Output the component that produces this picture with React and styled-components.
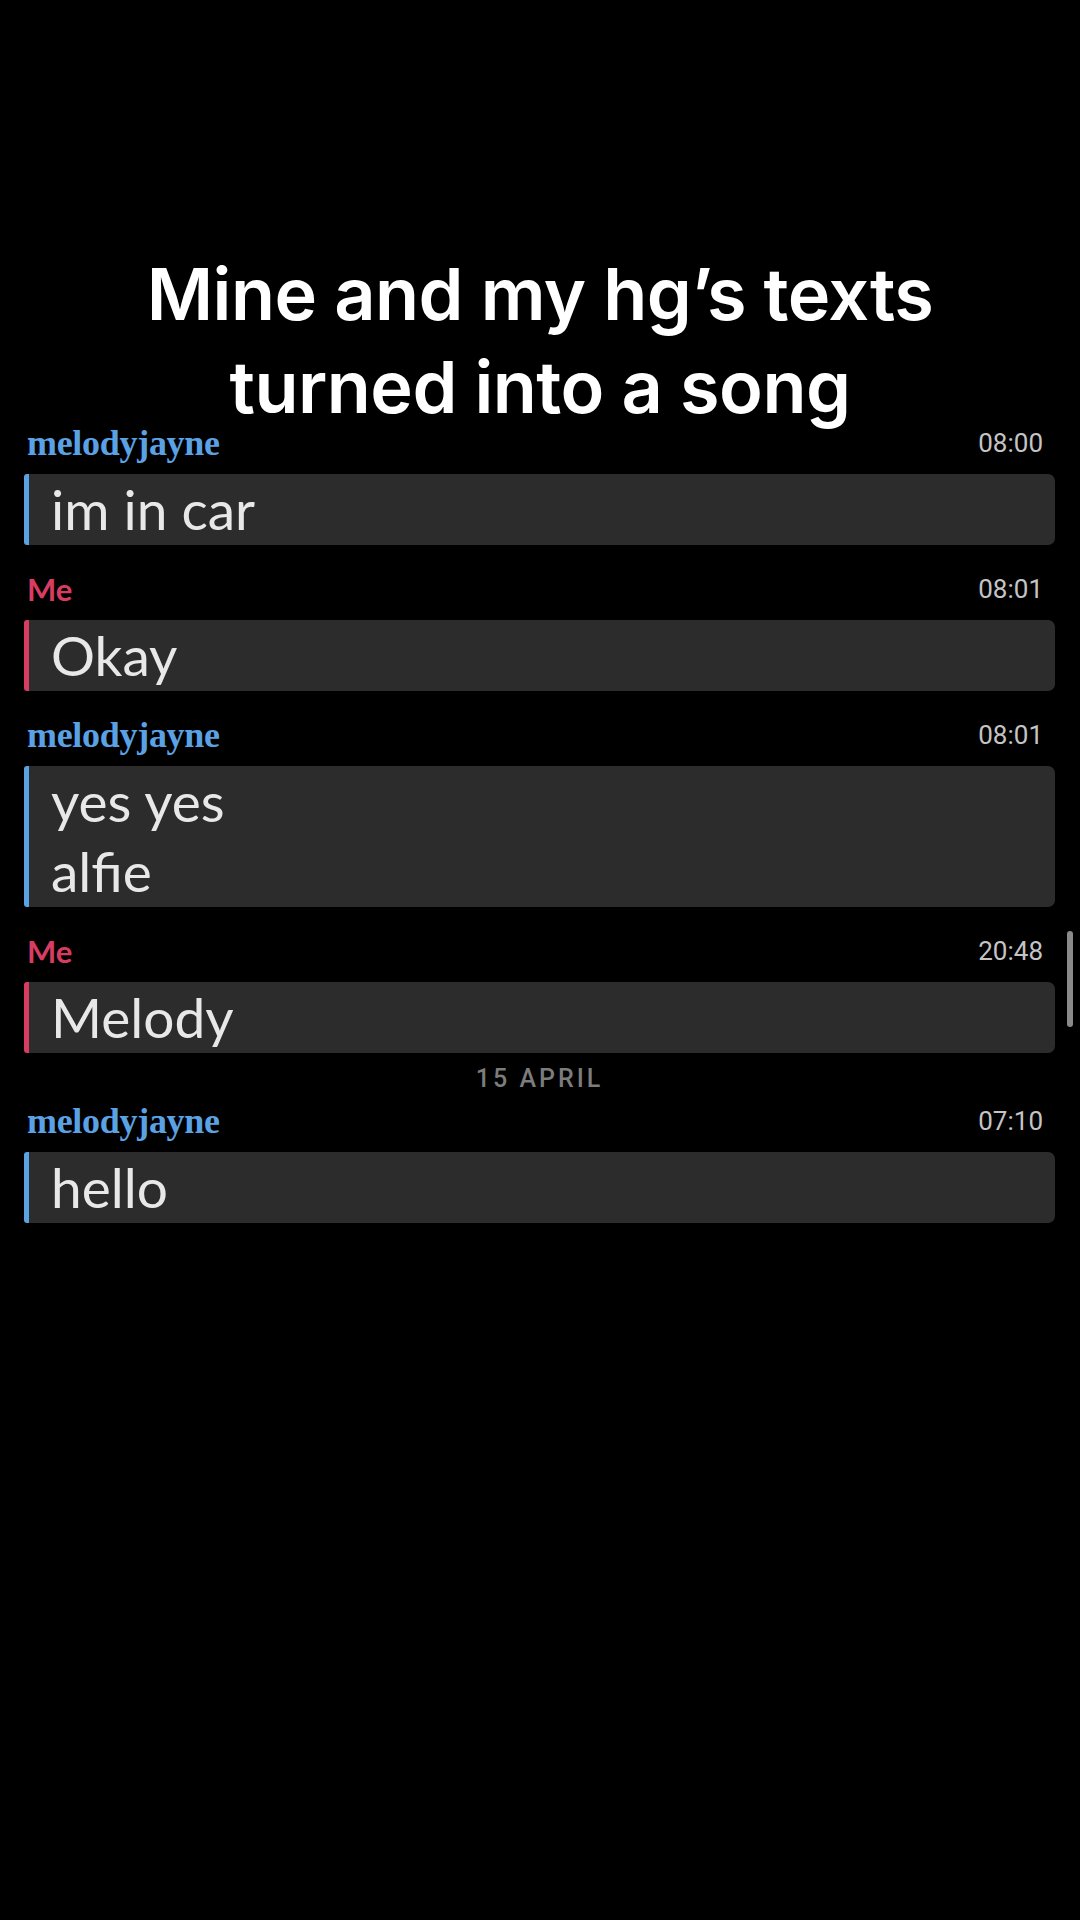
import React from "react";
import styled, { createGlobalStyle } from "styled-components";

const GlobalStyle = createGlobalStyle`
  html, body {
    margin: 0;
    padding: 0;
    background: #000;
  }
  body {
    font-family: "Inter", "Roboto", sans-serif;
  }
`;

const messages = [
  { from: "them", name: "melodyjayne", time: "08:00", lines: ["im in car"] },
  { from: "me", name: "Me", time: "08:01", lines: ["Okay"] },
  { from: "them", name: "melodyjayne", time: "08:01", lines: ["yes yes", "alfie"] },
  { from: "me", name: "Me", time: "20:48", lines: ["Melody"] },
  { date: "15 APRIL" },
  { from: "them", name: "melodyjayne", time: "07:10", lines: ["hello"] },
];

const accent = {
  them: "#5aa2e4",
  me: "#d83c62",
};

function App() {
  return (
    <>
      <GlobalStyle />
      <Screen>
        <Title>
          Mine and my hg’s texts
          <br />
          turned into a song
        </Title>

        <Thread>
          {messages.map((m, i) =>
            m.date ? (
              <DateDivider key={i}>{m.date}</DateDivider>
            ) : (
              <Message key={i} $afterDate={messages[i - 1]?.date}>
                <Header>
                  <Name $from={m.from}>{m.name}</Name>
                  <Time>{m.time}</Time>
                </Header>
                <Bubble $from={m.from}>
                  {m.lines.map((line) => (
                    <Line key={line}>{line}</Line>
                  ))}
                </Bubble>
              </Message>
            )
          )}
          <ScrollThumb />
        </Thread>
      </Screen>
    </>
  );
}

const Screen = styled.div`
  width: 1080px;
  height: 1920px;
  background: #000;
  padding-top: 247px;
  box-sizing: border-box;
  overflow: hidden;
`;

const Title = styled.h1`
  margin: 0 0 -10px;
  text-align: center;
  color: #fff;
  font-family: "Inter", sans-serif;
  font-weight: 600;
  font-size: 72px;
  line-height: 93px;
  letter-spacing: -0.5px;
`;

const Thread = styled.div`
  position: relative;
  display: flex;
  flex-direction: column;
  padding: 0 25px 0 24px;
`;

const Message = styled.div`
  display: flex;
  flex-direction: column;
  margin-top: ${(p) => (p.$afterDate ? "8px" : "24px")};

  &:first-child {
    margin-top: 0;
  }
`;

const Header = styled.div`
  height: 40px;
  display: flex;
  align-items: center;
  justify-content: space-between;
  padding: 0 12px 0 3px;
  margin-bottom: 11px;
`;

const Name = styled.span`
  color: ${(p) => accent[p.$from]};
  font-family: ${(p) =>
    p.$from === "me"
      ? `"Lato", "Noto Sans", sans-serif`
      : `"Liberation Serif", "DejaVu Serif", serif`};
  font-weight: 700;
  font-size: ${(p) => (p.$from === "me" ? "31px" : "36px")};
  letter-spacing: ${(p) => (p.$from === "me" ? "0" : "-0.3px")};
`;

const Time = styled.span`
  color: #c4c4c4;
  font-family: "Roboto", sans-serif;
  font-size: 26px;
`;

const Bubble = styled.div`
  background: #2c2c2c;
  border-left: 5px solid ${(p) => accent[p.$from]};
  border-radius: 3px 7px 7px 3px;
  padding: 0 20px 1px 22px;
  display: flex;
  flex-direction: column;
`;

const Line = styled.div`
  color: #e8e8e8;
  font-family: "Lato", "Noto Sans", sans-serif;
  font-size: 55px;
  line-height: 70px;
`;

const DateDivider = styled.div`
  margin-top: 10px;
  height: 30px;
  display: flex;
  align-items: center;
  justify-content: center;
  color: #7c7c7c;
  font-family: "Roboto", sans-serif;
  font-weight: 500;
  font-size: 25px;
  letter-spacing: 3px;
`;

const ScrollThumb = styled.div`
  position: absolute;
  right: 7px;
  top: 508px;
  width: 6px;
  height: 96px;
  border-radius: 3px;
  background: #8a8a8a;
`;

export default App;
